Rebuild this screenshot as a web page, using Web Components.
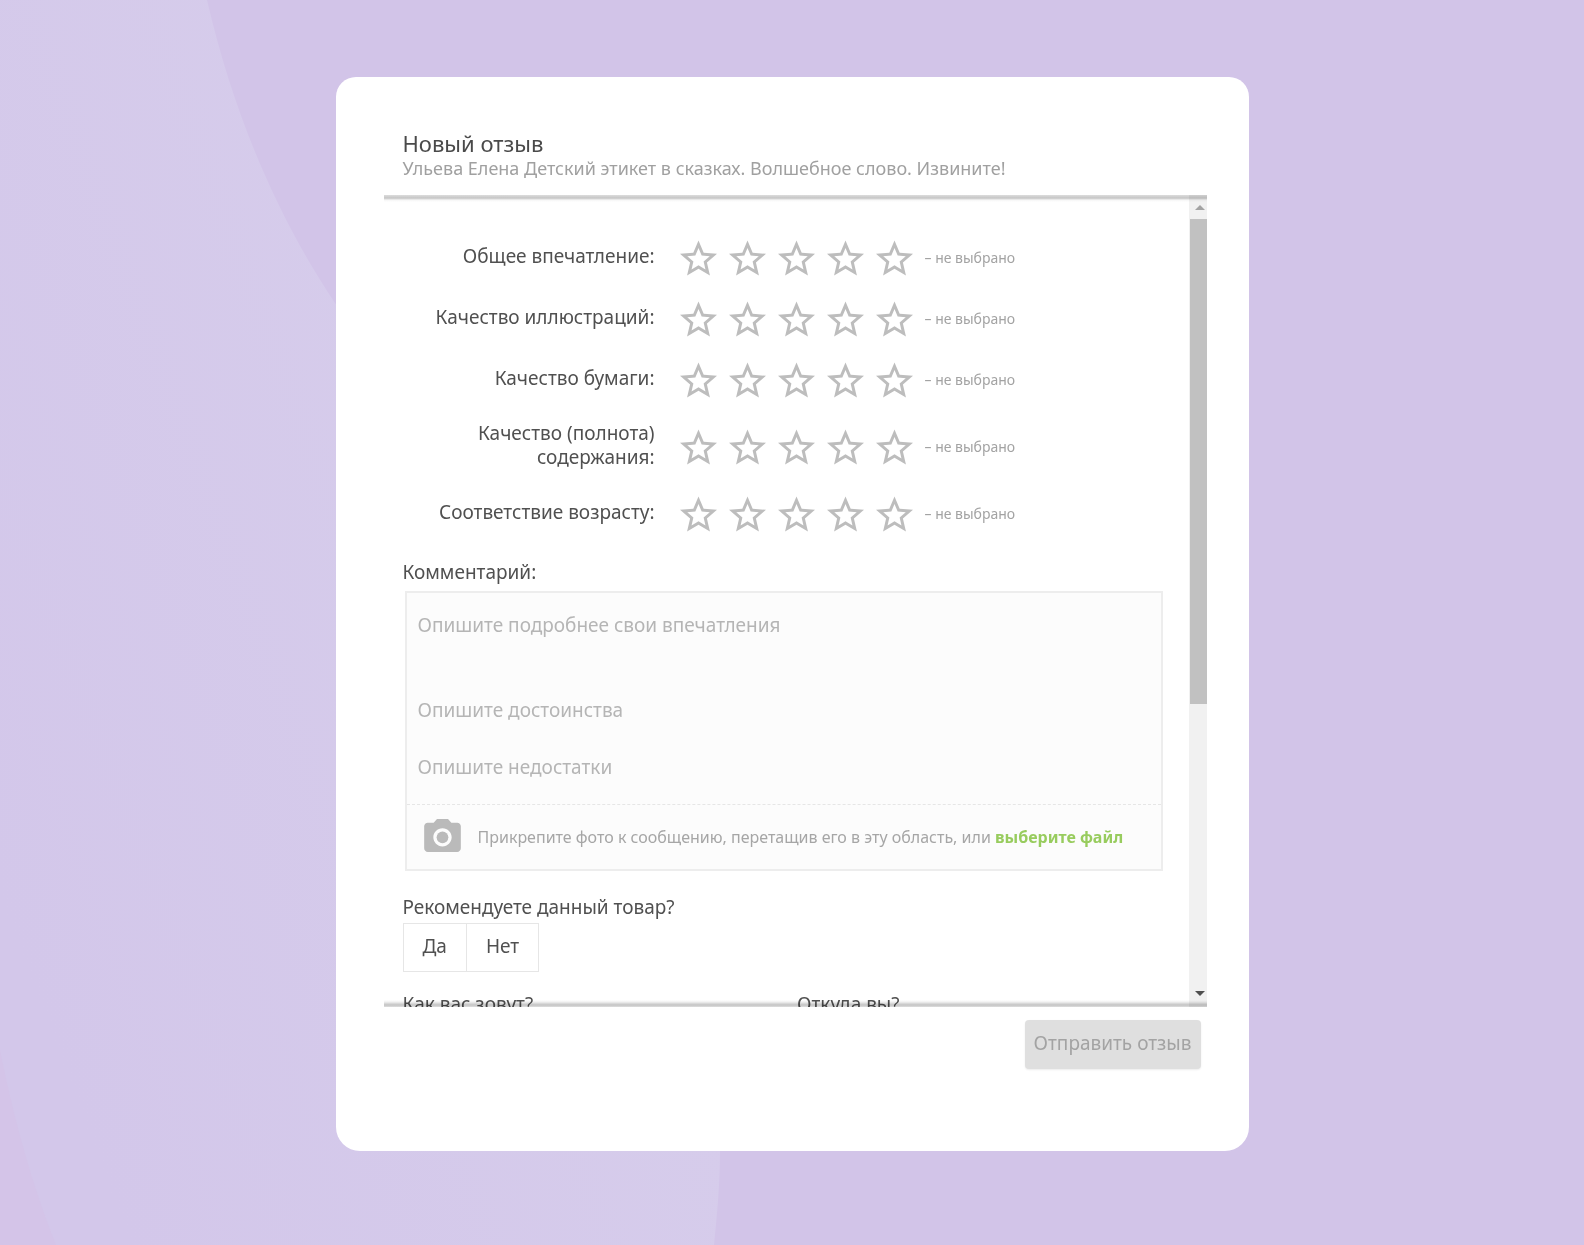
<!DOCTYPE html>
<html lang="ru">
<head>
<meta charset="utf-8">
<title>Новый отзыв</title>
<style>
  html, body { margin: 0; min-height: 100%; }
  body { background: #d2c4e8; font-family: "Noto Sans", "Open Sans", sans-serif; color: #505050; }
</style>
</head>
<body>
<review-page>
  <review-dialog>
    <h1 slot="title">Новый отзыв</h1>
    <p slot="subtitle">Ульева Елена Детский этикет в сказках. Волшебное слово. Извините!</p>
    <review-form></review-form>
    <button slot="action" type="submit" disabled>Отправить отзыв</button>
  </review-dialog>
</review-page>

<template id="page-template">
  <style>
    :host { display: grid; min-height: 100vh; overflow: hidden; }
    svg, main { grid-area: 1 / 1; }
    svg { width: 100%; height: 100%; min-height: 0; contain: size; display: block; }
    main { box-sizing: border-box; padding: 77px 24px 94px; display: flex; flex-direction: column; align-items: center; }
  </style>
  <svg viewBox="0 0 1584 1245" preserveAspectRatio="none" aria-hidden="true">
    <defs>
      <linearGradient id="g" gradientUnits="userSpaceOnUse" x1="0" y1="900" x2="560" y2="690">
        <stop offset="0" stop-color="#d3c7ea"/>
        <stop offset="1" stop-color="#d6cceb"/>
      </linearGradient>
    </defs>
    <path fill="url(#g)" d="M0 0H207C233 112 276 215 335 303C560 590 720 820 720 1150C720 1185 717 1215 714 1245H0Z"/>
    <path fill="#d4c4e8" d="M0 1050Q22 1160 56 1245H0Z"/>
  </svg>
  <main><slot></slot></main>
</template>

<template id="dialog-template">
  <style>
    :host { display: block; box-sizing: border-box; width: 100%; max-width: 913px; background: #fff; border-radius: 20px 20px 24px 24px; padding: 52px 42px 82px 48px; }
    header { padding: 0 19px 16px; }
    ::slotted(h1) { margin: 0; font-size: 22px; line-height: 28px; font-weight: 400; color: #4a4a4a; }
    ::slotted(p) { margin: 0; font-size: 18px; line-height: 22px; color: #a0a0a0; }
    .frame { display: flex; height: 812px; overflow: hidden; }
    .scroll { flex: 1; min-width: 0; overflow-y: auto; scrollbar-width: none; }
    .viewport { display: grid; }
    .viewport > * { grid-area: 1 / 1; min-width: 0; }
    .edge { pointer-events: none; z-index: 1; mix-blend-mode: multiply;
      background: linear-gradient(#dcdcdc, #c6c6c6 3px, #dadada 4px, #f6f6f6 5px, #fff 7px) top / 100% 7px no-repeat,
                  linear-gradient(#fff, #f0f0f0 2px, #d0d0d0 4px, #c4c4c4 5px, #dedede 7px) bottom / 100% 7px no-repeat; }
    footer { display: flex; justify-content: flex-end; padding: 13px 6px 0 0; }
    ::slotted(button) { border: 0; border-radius: 4px; height: 49px; padding: 0 9px 3px; background: #dfdfdf; color: #a3a3a3; font: inherit; font-size: 19px; line-height: 24px; box-shadow: 0 1px 2px #ececec; }
  </style>
  <header><slot name="title"></slot><slot name="subtitle"></slot></header>
  <div class="viewport">
    <div class="frame"><div class="scroll"><slot></slot></div><scroll-rail></scroll-rail></div>
    <div class="edge"></div>
  </div>
  <footer><slot name="action"></slot></footer>
</template>

<template id="rail-template">
  <style>
    :host { display: flex; flex-direction: column; width: 18px; background: #f1f1f1; }
    .up, .down { height: 24px; display: grid; place-items: center; padding-left: 4px; }
    .down { margin-top: auto; height: 28px; }
    .thumb { flex: 0 0 485px; background: #c1c1c1; margin-left: 1px; }
    svg { display: block; width: 10px; height: 5px; }
  </style>
  <div class="up"><svg viewBox="0 0 10 5"><path fill="#a3a3a3" d="M5 0L10 5H0Z"/></svg></div>
  <div class="thumb"></div>
  <div class="down"><svg viewBox="0 0 10 5"><path fill="#505050" d="M0 0H10L5 5Z"/></svg></div>
</template>

<template id="rating-template">
  <style>
    :host { display: grid; grid-template-columns: 252px 1fr; column-gap: 25px; align-items: center; }
    .name { font-size: 19px; line-height: 24px; text-align: right; margin: -2px 0 2px; }
    .value { display: flex; align-items: center; gap: 12px; }
    label { display: grid; width: 37px; height: 36px; }
    input, svg { grid-area: 1 / 1; width: 37px; height: 36px; margin: 0; display: block; }
    input { appearance: none; cursor: pointer; }
    svg { pointer-events: none; fill: #bdbdbd; }
    output { font-size: 14px; line-height: 18px; color: #a3a3a3; white-space: nowrap; }
  </style>
  <div class="name" id="name"><slot></slot></div>
  <div class="value" role="radiogroup" aria-labelledby="name"></div>
</template>

<template id="comment-template">
  <style>
    :host { display: block; margin: 0 1px 0 2px; border: 2px solid #ededed; background: #fcfcfc; }
    .fields { display: flex; flex-direction: column; padding: 19px 11px 9px; }
    textarea, input[type=text] { display: block; box-sizing: border-box; width: 100%; margin: 0; padding: 0; border: 0; outline: 0; background: none; resize: none; font: inherit; font-size: 19px; line-height: 26px; color: #4a4a4a; }
    textarea { height: 69px; }
    input[type=text] { height: 57px; }
    ::placeholder { color: #b5b5b5; opacity: 1; }
    .attach { display: flex; align-items: center; gap: 17px; height: 64px; padding: 0 17px; border-top: 1px dashed #e6e6e6; font-size: 16px; line-height: 20px; color: #a6a6a6; }
    svg { flex: none; width: 37px; height: 33px; fill: #bababa; margin-top: -4px; }
    a { color: #98cc5e; font-weight: 700; text-decoration: none; }
  </style>
  <div class="fields">
    <textarea aria-label="Впечатления" placeholder="Опишите подробнее свои впечатления"></textarea>
    <input type="text" aria-label="Достоинства" placeholder="Опишите достоинства">
    <input type="text" aria-label="Недостатки" placeholder="Опишите недостатки">
  </div>
  <div class="attach">
    <svg viewBox="2 2 20 18" aria-hidden="true"><circle cx="12" cy="12" r="3.2"/><path d="M9 2L7.17 4H4c-1.1 0-2 .9-2 2v12c0 1.1.9 2 2 2h16c1.1 0 2-.9 2-2V6c0-1.1-.9-2-2-2h-3.17L15 2H9zm3 15c-2.76 0-5-2.24-5-5s2.24-5 5-5 5 2.24 5 5-2.24 5-5 5z"/></svg>
    <span>Прикрепите фото к сообщению, перетащив его в эту область, или <a href="#file">выберите файл</a></span>
  </div>
</template>

<template id="form-template">
  <style>
    :host { display: block; padding: 45px 25px 0 19px; font-size: 19px; line-height: 24px; }
    .ratings { display: flex; flex-direction: column; gap: 25px; }
    h2 { margin: 0; font: inherit; }
    .comment { margin: 28px 0 7px; }
    .recommend { margin: 24px 0 4px; }
    .choice { display: flex; width: fit-content; border: 1px solid #e6e6e6; }
    button { height: 47px; padding: 0 19px 3px; border: 0; background: #fff; color: inherit; font: inherit; }
    button + button { border-left: 1px solid #e6e6e6; }
    .person { display: grid; grid-template-columns: 1fr 1fr; gap: 28px; padding-top: 20px; }
    .person label { display: block; }
    .person input { display: block; box-sizing: border-box; width: 100%; height: 48px; margin-top: 4px; border: 1px solid #e6e6e6; font: inherit; }
  </style>
  <div class="ratings">
    <star-rating>Общее впечатление:</star-rating>
    <star-rating>Качество иллюстраций:</star-rating>
    <star-rating>Качество бумаги:</star-rating>
    <star-rating>Качество (полнота)<br>содержания:</star-rating>
    <star-rating>Соответствие возрасту:</star-rating>
  </div>
  <h2 class="comment">Комментарий:</h2>
  <comment-box></comment-box>
  <h2 class="recommend">Рекомендуете данный товар?</h2>
  <div class="choice"><button type="button">Да</button><button type="button">Нет</button></div>
  <div class="person">
    <label>Как вас зовут?<input type="text"></label>
    <label>Откуда вы?<input type="text"></label>
  </div>
</template>

<script>
  class TemplateElement extends HTMLElement {
    constructor() {
      super();
      const template = document.getElementById(this.constructor.template);
      this.attachShadow({ mode: 'open' }).append(template.content.cloneNode(true));
    }
  }
  const component = (tag, template) =>
    customElements.define(tag, class extends TemplateElement { static template = template; });

  const STAR = 'M22 9.24l-7.19-.62L12 2 9.19 8.63 2 9.24l5.46 4.73L5.82 21 12 17.27 18.18 21l-1.63-7.03L22 9.24zM12 15.4l-3.76 2.27 1-4.28-3.32-2.88 4.38-.38L12 6.1l1.71 4.04 4.38.38-3.32 2.88 1 4.28L12 15.4z';

  class StarRating extends TemplateElement {
    static template = 'rating-template';
    constructor() {
      super();
      const stars = [1, 2, 3, 4, 5].map(n =>
        `<label><input type="radio" name="stars" value="${n}" aria-label="${n}"><svg viewBox="2 2 20 19" aria-hidden="true"><path d="${STAR}"/></svg></label>`);
      this.shadowRoot.querySelector('.value').innerHTML = stars.join('') + '<output>– не выбрано</output>';
    }
  }

  component('scroll-rail', 'rail-template');
  customElements.define('star-rating', StarRating);
  component('comment-box', 'comment-template');
  component('review-form', 'form-template');
  component('review-dialog', 'dialog-template');
  component('review-page', 'page-template');
</script>
</body>
</html>
